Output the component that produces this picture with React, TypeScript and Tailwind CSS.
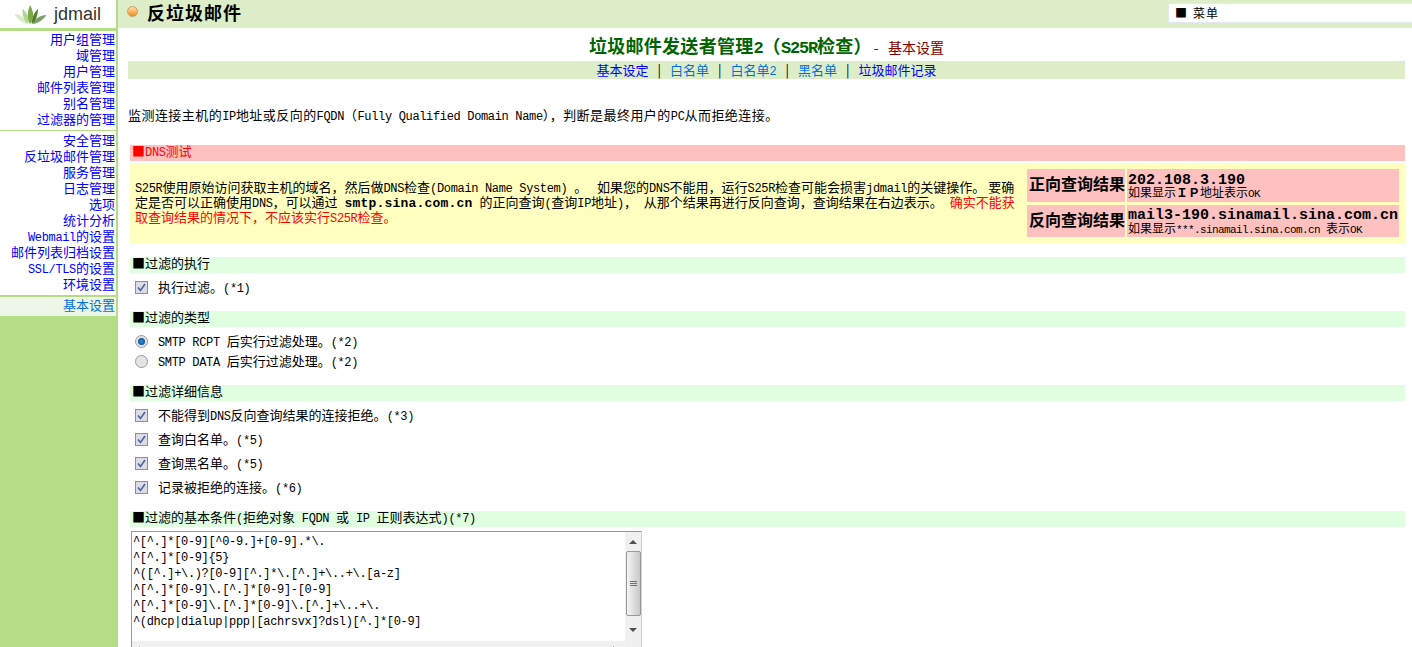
import * as React from "react"

const cjk = "font-['Noto_Sans_CJK_SC','Liberation_Sans',sans-serif]"

// half-width latin, SimSun style
function L({ children }: { children: React.ReactNode }) {
  return <span className="font-['Liberation_Mono',monospace] text-[12px] leading-none tracking-[-0.34px] whitespace-pre">{children}</span>
}

// smaller one for the result cells
function S({ children }: { children: React.ReactNode }) {
  return <span className="font-['Liberation_Mono',monospace] text-[11px] leading-none tracking-[-0.6px] whitespace-pre">{children}</span>
}

// wider bold latin inside the page title
function T({ children }: { children: React.ReactNode }) {
  return <span className="font-['Liberation_Mono',monospace] text-[17px] tracking-[-1.2px]">{children}</span>
}

function Leaf() {
  return (
    <svg width="34" height="20" viewBox="0 0 36 22" className="shrink-0 mt-[2px]">
      <path d="M14 21 C8 20 3 16 0 10 C6 10 12 15 14 21Z" fill="#dcebc8" />
      <path d="M15 21 C10 17 8 11 9 4 C13 8 16 14 15 21Z" fill="#b3d592" />
      <path d="M20 21 C26 20 31 17 35 11 C28 11 22 15 20 21Z" fill="#7f9f69" />
      <path d="M19 21 C24 17 25 11 26 4 C22 8 18 14 19 21Z" fill="#4f7f33" />
      <path d="M17 21 C13 15 14 7 17 0 C21 7 22 15 17 21Z" fill="#7cab47" />
    </svg>
  )
}

function Check() {
  return (
    <div className="w-[13px] h-[13px] border border-[#8e8f8f] bg-[#dcdce4] flex items-center justify-center shrink-0">
      <svg width="9" height="9" viewBox="0 0 9 9">
        <path d="M1 4.5 L3.5 7.5 L8 1" fill="none" stroke="#4a66a8" strokeWidth="1.6" />
      </svg>
    </div>
  )
}

function Radio({ on }: { on?: boolean }) {
  return (
    <div className="w-[13px] h-[13px] rounded-full border border-[#9a9a9a] bg-[#e4e4e8] flex items-center justify-center shrink-0">
      {on && <div className="w-[7px] h-[7px] rounded-full bg-radial from-[#2f8fd8] to-[#0a3f80]" />}
    </div>
  )
}

function Section({ children, className = "" }: { children: React.ReactNode; className?: string }) {
  return <div className={"ml-[2px] h-[16px] leading-[12px] bg-[#e0ffe0] px-[2px] text-black " + className}>{children}</div>
}

function Row({ control, children, className = "" }: { control: React.ReactNode; children: React.ReactNode; className?: string }) {
  return (
    <div className={"flex items-center h-[16px] pl-[7px] gap-[10px] " + className}>
      {control}
      <div>{children}</div>
    </div>
  )
}

function Scrollbar() {
  return (
    <div className="w-[16px] flex flex-col items-center bg-[#f0f0f0] shrink-0">
      <div className="h-[19px] flex items-center justify-center">
        <div className="border-x-[4px] border-x-transparent border-b-[4px] border-b-[#505050]" />
      </div>
      <div className="w-[15px] h-[65px] border border-[#989898] rounded-[2px] bg-gradient-to-r from-[#f4f4f4] to-[#c8c8c8] flex flex-col items-center justify-center gap-[1px]">
        <div className="w-[7px] h-px bg-[#707070]" />
        <div className="w-[7px] h-px bg-[#707070]" />
        <div className="w-[7px] h-px bg-[#707070]" />
      </div>
      <div className="flex-1 flex items-center justify-center pt-[3px]">
        <div className="border-x-[4px] border-x-transparent border-t-[4px] border-t-[#505050]" />
      </div>
    </div>
  )
}

const menu1 = ["用户组管理", "域管理", "用户管理", "邮件列表管理", "别名管理", "过滤器的管理"]
const menu2 = [
  <>安全管理</>,
  <>反垃圾邮件管理</>,
  <>服务管理</>,
  <>日志管理</>,
  <>选项</>,
  <>统计分析</>,
  <><L>Webmail</L>的设置</>,
  <>邮件列表归档设置</>,
  <><L>SSL/TLS</L>的设置</>,
  <>环境设置</>,
]
const filters = [
  "^[^.]*[0-9][^0-9.]+[0-9].*\\.",
  "^[^.]*[0-9]{5}",
  "^([^.]+\\.)?[0-9][^.]*\\.[^.]+\\..+\\.[a-z]",
  "^[^.]*[0-9]\\.[^.]*[0-9]-[0-9]",
  "^[^.]*[0-9]\\.[^.]*[0-9]\\.[^.]+\\..+\\.",
  "^(dhcp|dialup|ppp|[achrsvx]?dsl)[^.]*[0-9]",
]

export default function App() {
  return (
    <div className={"flex w-[1412px] h-[647px] overflow-hidden bg-white text-black text-[13px] leading-[16px] " + cjk}>
      <div className="w-[118px] shrink-0 flex flex-col border-r-2 border-[#b5dc87] bg-[#b5dc87]">
        <div className="h-[28px] bg-white flex items-center pl-[14px] gap-[6px]">
          <Leaf />
          <span className="font-['Liberation_Sans',sans-serif] text-[18px] text-[#333]">jdmail</span>
        </div>
        <div className="h-[3px] bg-[#b5dc87]" />
        <div className="bg-white h-[99px] pr-[1px] text-right text-[#0000ff]">
          {menu1.map((m, i) => <div key={i}>{m}</div>)}
        </div>
        <div className="h-px bg-[#b5dc87]" />
        <div className="bg-white h-[164px] pr-[1px] text-right text-[#0000ff]">
          {menu2.map((m, i) => <div key={i} className="first:mt-px">{m}</div>)}
        </div>
        <div className="h-[2px] bg-[#b5dc87]" />
        <div className="h-[19px] bg-[#eef6e8] pr-[1px] text-right leading-[15px] text-[#0070e0]">基本设置</div>
      </div>

      <div className="flex-1 min-w-0 flex flex-col">
        <div className="h-[28px] bg-[#dcedc8] flex items-center pl-[9px] relative">
          <div className="w-[11px] h-[11px] rounded-full border border-[#c0a070] mb-[6px] bg-gradient-to-b from-[#ffe0a0] to-[#f08a00]" />
          <h1 className="ml-[9px] text-[18px] font-bold tracking-[1px] leading-[24px] mb-[4px]">反垃圾邮件</h1>
          <div className="absolute right-0 top-[3px] w-[244px] h-[20px] bg-white border-t border-l border-b border-[#e4e8f0] pl-[6px] flex items-center gap-[6px]">
            <span className="text-[12px]">■</span>
            <span className="text-[12px] tracking-[1px]">菜单</span>
          </div>
        </div>

        <div className="flex flex-col ml-[10px] mr-[7px]">
          <div className="h-[33px] flex items-center justify-center pt-[5px]">
            <span className="text-[18px] font-bold text-[#006400] whitespace-nowrap tracking-[0.3px]">
              垃圾邮件发送者管理<T>2</T>&#xFF08;<T>S25R</T>检查&#xFF09;
            </span>
            <span className="ml-[2px] text-[14px] text-[#800000] whitespace-pre">-   基本设置</span>
          </div>
          <div className="h-[18px] bg-[#dcedc8] flex items-center justify-center gap-[9px]">
            <span className="text-[#0000ff]">基本设定</span>
            <span>|</span>
            <span className="text-[#0070e0]">白名单</span>
            <span>|</span>
            <span className="text-[#0070e0]">白名单<L>2</L></span>
            <span>|</span>
            <span className="text-[#0070e0]">黑名单</span>
            <span>|</span>
            <span className="text-[#0000ff]">垃圾邮件记录</span>
          </div>

          <p className="mt-[28px] tracking-[0.45px]">监测连接主机的<L>IP</L>地址或反向的<L>FQDN</L>&#xFF08;<L>Fully Qualified Domain Name</L>&#xFF09;&#xFF0C;判断是最终用户的<L>PC</L>从而拒绝连接。</p>

          <div className="mt-[22px] ml-[2px] h-[16px] leading-[12px] bg-[#ffc0c0] px-[2px] text-[#ff0000]">■<L>DNS</L>测试</div>

          <div className="mt-[2px] ml-[2px] h-[80px] bg-[#ffffc0] flex">
            <div className="w-[897px] pl-[5px] pr-[8px] pt-[17px] leading-[14px] shrink-0">
              <L>S25R</L>使用原始访问获取主机的域名&#xFF0C;然后做<L>DNS</L>检查<L>(Domain Name System) </L>。 <L> </L>如果您的<L>DNS</L>不能用&#xFF0C;运行<L>S25R</L>检查可能会损害<L>jdmail</L>的关键操作。 要确定是否可以正确使用<L>DNS</L>&#xFF0C;可以通过<L> </L><span className="font-['Liberation_Mono',monospace] font-bold text-[13px] leading-none tracking-[0.2px]">smtp.sina.com.cn</span><L> </L>的正向查询<L>(</L>查询<L>IP</L>地址<L>)</L>&#xFF0C;<L> </L>从那个结果再进行反向查询&#xFF0C;查询结果在右边表示。<L> </L><span className="text-[#ff0000]">确实不能获取查询结果的情况下&#xFF0C;不应该实行<L>S25R</L>检查。</span>
            </div>
            <div className="flex flex-col gap-[3px] pt-[6px]">
              <div className="flex gap-[2px] h-[33px]">
                <div className="w-[98px] bg-[#ffc0c0] flex items-center pl-[2px] pb-[5px] text-[16px] font-bold whitespace-nowrap">正向查询结果</div>
                <div className="w-[272px] bg-[#ffc0c0] pl-px pt-[4px] text-[12px] leading-[14px]">
                  <div className="font-['Liberation_Mono',monospace] font-bold text-[15px] leading-[15px]">202.108.3.190</div>
                  <div className="-mt-[3px]">如果显示<b>&#xFF29;&#xFF30;</b>地址表示<S>OK</S></div>
                </div>
              </div>
              <div className="flex gap-[2px] h-[32px]">
                <div className="w-[98px] bg-[#ffc0c0] flex items-center pl-[2px] pb-[5px] text-[16px] font-bold whitespace-nowrap">反向查询结果</div>
                <div className="w-[272px] bg-[#ffc0c0] pl-px pt-[3px] text-[12px] leading-[14px] whitespace-nowrap">
                  <div className="font-['Liberation_Mono',monospace] font-bold text-[15px] leading-[15px]">mail3-190.sinamail.sina.com.cn</div>
                  <div className="-mt-[2px]">如果显示<S>***.sinamail.sina.com.cn </S>表示<S>OK</S></div>
                </div>
              </div>
            </div>
          </div>

          <Section className="mt-[14px]">■过滤的执行</Section>
          <Row className="mt-[6px]" control={<Check />}>执行过滤。<L>(*1)</L></Row>

          <Section className="mt-[16px]">■过滤的类型</Section>
          <Row className="mt-[6px]" control={<Radio on />}><L>SMTP RCPT </L>后实行过滤处理。<L>(*2)</L></Row>
          <Row className="mt-[4px]" control={<Radio />}><L>SMTP DATA </L>后实行过滤处理。<L>(*2)</L></Row>

          <Section className="mt-[16px]">■过滤详细信息</Section>
          <Row className="mt-[6px]" control={<Check />}>不能得到<L>DNS</L>反向查询结果的连接拒绝。<L>(*3)</L></Row>
          <Row className="mt-[8px]" control={<Check />}>查询白名单。<L>(*5)</L></Row>
          <Row className="mt-[8px]" control={<Check />}>查询黑名单。<L>(*5)</L></Row>
          <Row className="mt-[8px]" control={<Check />}>记录被拒绝的连接。<L>(*6)</L></Row>

          <Section className="mt-[16px]">■过滤的基本条件<L>(</L>拒绝对象<L> FQDN </L>或<L> IP </L>正则表达式<L>)(*7)</L></Section>

          <div className="mt-[4px] ml-[3px] w-[511px] h-[130px] border-t border-l border-[#9a9a9a] border-r border-r-[#d0d0d0] flex flex-col">
            <div className="h-[109px] flex">
              <div className="flex-1 pl-[1px] whitespace-pre">
                {filters.map((f, i) => <div key={i}><L>{f}</L></div>)}
              </div>
              <Scrollbar />
            </div>
            <div className="h-[17px] bg-[#f0f0f0] flex justify-between pl-[4px] pr-[24px] pt-[5px]">
              <div className="border-y-[4px] border-y-transparent border-r-[4px] border-r-[#909090] h-0" />
              <div className="border-y-[4px] border-y-transparent border-l-[4px] border-l-[#505050] h-0" />
            </div>
          </div>
        </div>
      </div>
    </div>
  )
}
